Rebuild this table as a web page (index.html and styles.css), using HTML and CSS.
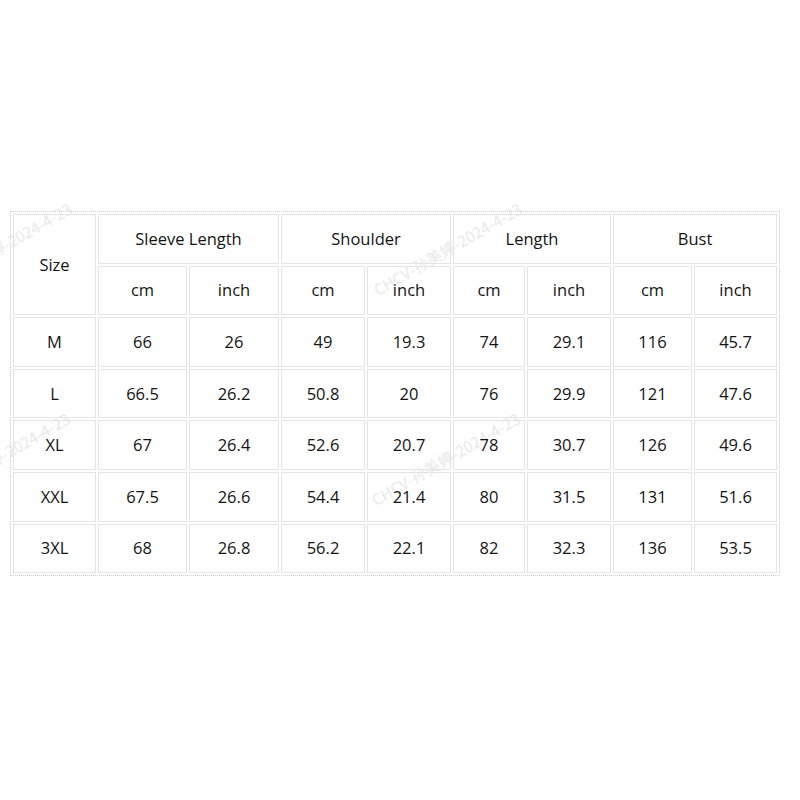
FILE: index.html
```html
<!DOCTYPE html>
<html lang="en">
<head>
<meta charset="utf-8">
<title>Size Chart</title>
<link rel="stylesheet" href="styles.css">
</head>
<body>
<div class="sheet">
  <div class="watermark wm-a">CHCV-孙美婷-2024-4-23</div>
  <div class="watermark wm-b">CHCV-孙美婷-2024-4-23</div>
  <div class="watermark wm-c">CHCV-孙美婷-2024-4-23</div>
  <div class="watermark wm-d">CHCV-孙美婷-2024-4-23</div>
  <table class="chart">
    <colgroup>
      <col class="c-size">
      <col class="c-slcm">
      <col class="c-slin">
      <col class="c-shcm">
      <col class="c-shin">
      <col class="c-lecm">
      <col class="c-lein">
      <col class="c-bucm">
      <col class="c-buin">
    </colgroup>
    <thead>
      <tr>
        <th rowspan="2">Size</th>
        <th colspan="2">Sleeve Length</th>
        <th colspan="2">Shoulder</th>
        <th colspan="2">Length</th>
        <th colspan="2">Bust</th>
      </tr>
      <tr>
        <th>cm</th><th>inch</th>
        <th>cm</th><th>inch</th>
        <th>cm</th><th>inch</th>
        <th>cm</th><th>inch</th>
      </tr>
    </thead>
    <tbody>
      <tr><td>M</td><td>66</td><td>26</td><td>49</td><td>19.3</td><td>74</td><td>29.1</td><td>116</td><td>45.7</td></tr>
      <tr><td>L</td><td>66.5</td><td>26.2</td><td>50.8</td><td>20</td><td>76</td><td>29.9</td><td>121</td><td>47.6</td></tr>
      <tr><td>XL</td><td>67</td><td>26.4</td><td>52.6</td><td>20.7</td><td>78</td><td>30.7</td><td>126</td><td>49.6</td></tr>
      <tr><td>XXL</td><td>67.5</td><td>26.6</td><td>54.4</td><td>21.4</td><td>80</td><td>31.5</td><td>131</td><td>51.6</td></tr>
      <tr><td>3XL</td><td>68</td><td>26.8</td><td>56.2</td><td>22.1</td><td>82</td><td>32.3</td><td>136</td><td>53.5</td></tr>
    </tbody>
  </table>
</div>
</body>
</html>
```

FILE: styles.css
```css
html, body {
  margin: 0;
  padding: 0;
  background: #ffffff;
}

body {
  font-family: "Open Sans", "Noto Sans", "Noto Sans CJK SC", sans-serif;
  color: #141414;
}

.sheet {
  position: relative;
  margin-top: 200px;
  height: 390px;
  overflow: hidden;
  padding: 11px 0 0 10px;
  box-sizing: border-box;
}

.watermark {
  position: absolute;
  font-family: "Noto Sans CJK SC", "Noto Sans", sans-serif;
  font-size: 15.5px;
  white-space: nowrap;
  color: #e9e9e9;
  transform: rotate(-30deg);
  transform-origin: 0 100%;
  z-index: 0;
  pointer-events: none;
}

.wm-a { left: 380px; top: 78px; }
.wm-b { left: -70px; top: 78px; }
.wm-c { left: 378px; top: 288px; }
.wm-d { left: -72px; top: 288px; }

.chart {
  position: relative;
  z-index: 1;
  table-layout: fixed;
  width: 770px;
  border: 1px dotted #cfcfcf;
  border-spacing: 2px;
  background: transparent;
}

.c-size { width: 83px; }
.c-slcm { width: 89px; }
.c-slin { width: 90px; }
.c-shcm { width: 84px; }
.c-shin { width: 84px; }
.c-lecm { width: 72px; }
.c-lein { width: 84px; }
.c-bucm { width: 79px; }
.c-buin { width: 83px; }

.chart tr {
  height: 49.6px;
}

.chart th,
.chart td {
  border: 1px solid #e4e4e4;
  padding: 0;
  text-align: center;
  vertical-align: middle;
  font-weight: normal;
  font-size: 16.5px;
  line-height: 20px;
}
```
